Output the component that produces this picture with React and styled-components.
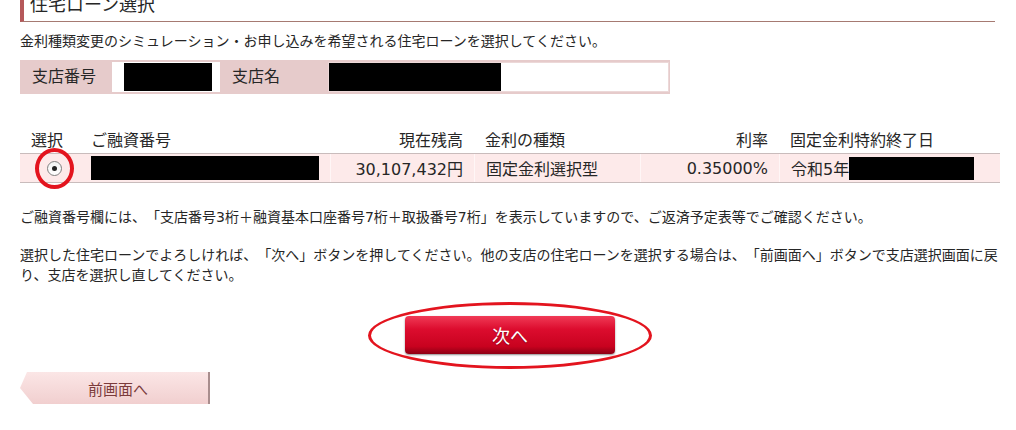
import React from "react";
import styled, { createGlobalStyle } from "styled-components";

const GlobalStyle = createGlobalStyle`
  body {
    margin: 0;
    background: #fff;
    color: #262626;
    font-family: "DejaVu Sans", "Noto Sans CJK JP", sans-serif;
    text-spacing-trim: space-all;
  }
`;

const Page = styled.div`
  width: 980px;
  margin-left: 20px;
  display: flow-root;
`;

const Title = styled.h2`
  margin: -6px 0 0;
  width: 975px;
  box-sizing: border-box;
  padding: 0 0 5px 6px;
  font-size: 18px;
  font-weight: normal;
  line-height: 22px;
  border-left: 4px solid #b5585a;
  border-bottom: 1px solid #a67a72;
`;

const Text = styled.p`
  margin: ${(p) => p.$top || 0}px -12px 0 0;
  font-size: 14px;
  line-height: 20px;
`;

const InfoBox = styled.div`
  display: flex;
  align-items: center;
  width: 650px;
  height: 34px;
  box-sizing: border-box;
  margin-top: 9px;
  background: #e6cbcb;
  font-size: 16px;
`;

const InfoLabel = styled.div`
  width: ${(p) => p.$w}px;
  box-sizing: border-box;
  padding-left: 12px;
  line-height: 30px;
`;

const InfoValue = styled.div`
  display: flex;
  align-items: center;
  height: 30px;
  box-sizing: border-box;
  background: #fff;
  width: ${(p) => (p.$w ? `${p.$w}px` : "auto")};
  flex: ${(p) => (p.$w ? "none" : 1)};
  margin-right: ${(p) => (p.$w ? 0 : 1)}px;
  padding-left: ${(p) => p.$pad}px;
  border: ${(p) => (p.$w ? "none" : "1px solid #ecd8d8")};
`;

const Redact = styled.span`
  display: inline-block;
  width: ${(p) => p.$w}px;
  height: ${(p) => p.$h || 28}px;
  background: #000;
`;

const Table = styled.div`
  margin-top: 31px;
  font-size: 16px;
`;

const Row = styled.div`
  display: grid;
  grid-template-columns: 60px 250px 144px 166px 139px 1fr;
  height: 29px;
  box-sizing: border-box;
  border-bottom: 1px solid #c9bcbc;
  background: ${(p) => (p.$data ? "#fdeaea" : "#fff")};
`;

const Cell = styled.div`
  display: flex;
  align-items: center;
  justify-content: ${(p) => (p.$right ? "flex-end" : "flex-start")};
  padding: 0 11px;
  white-space: nowrap;
  border-left: ${(p) => (p.$sep ? "1px solid #fff6f6" : "none")};
`;

const RadioCell = styled.div`
  display: flex;
  align-items: center;
  padding-left: 27px;
`;

const RadioWrap = styled.span`
  position: relative;
  display: inline-flex;
`;

const Radio = styled.span`
  width: 13px;
  height: 13px;
  border-radius: 50%;
  border: 1px solid #808080;
  background: linear-gradient(#f2f2f2, #fff);
  display: flex;
  align-items: center;
  justify-content: center;
  &::after {
    content: "";
    width: 5px;
    height: 5px;
    border-radius: 50%;
    background: #222;
  }
`;

const Ring = styled.span`
  position: absolute;
  left: ${(p) => p.$l}px;
  top: ${(p) => p.$t}px;
  width: ${(p) => p.$w}px;
  height: ${(p) => p.$h}px;
  box-sizing: border-box;
  border: ${(p) => p.$s || 3}px solid #e3141e;
  border-radius: 50%;
  pointer-events: none;
`;

const Actions = styled.div`
  display: flex;
  justify-content: center;
  margin-top: 31px;
`;

const NextButton = styled.button`
  position: relative;
  width: 210px;
  height: 38px;
  border: none;
  border-radius: 4px;
  background: linear-gradient(#f03a56 0%, #dc0c2e 35%, #c8021f 80%, #8e0014 100%);
  box-shadow: 0 1px 2px rgba(0, 0, 0, 0.45);
  color: #fff;
  font-family: "DejaVu Sans", "Noto Sans CJK JP", sans-serif;
  font-size: 18px;
  text-shadow: 0 1px 1px rgba(0, 0, 0, 0.3);
`;

const BackButton = styled.button`
  display: block;
  margin-top: 18px;
  width: 190px;
  height: 32px;
  padding: 0 0 0 6px;
  border: none;
  clip-path: polygon(7px 0, 100% 0, 100% 100%, 13px 100%, 0 50%);
  background: linear-gradient(#fbe6e6, #f1cfcf);
  box-shadow: inset -2px 0 0 #a88d8d;
  color: #7b3b3b;
  font-family: "DejaVu Sans", "Noto Sans CJK JP", sans-serif;
  font-size: 15px;
`;

export default function App() {
  return (
    <Page>
      <GlobalStyle />
      <Title>住宅ローン選択</Title>
      <Text $top={9}>金利種類変更のシミュレーション・お申し込みを希望される住宅ローンを選択してください。</Text>

      <InfoBox>
        <InfoLabel $w={92}>支店番号</InfoLabel>
        <InfoValue $w={108} $pad={12}>
          <Redact $w={88} />
        </InfoValue>
        <InfoLabel $w={108}>支店名</InfoLabel>
        <InfoValue $pad={0}>
          <Redact $w={172} />
        </InfoValue>
      </InfoBox>

      <Table>
        <Row>
          <Cell>選択</Cell>
          <Cell>ご融資番号</Cell>
          <Cell $right>現在残高</Cell>
          <Cell>金利の種類</Cell>
          <Cell $right>利率</Cell>
          <Cell>固定金利特約終了日</Cell>
        </Row>
        <Row $data>
          <RadioCell>
            <RadioWrap>
              <Radio />
              <Ring $l={-12} $t={-13} $w={39} $h={41} $s={4} />
            </RadioWrap>
          </RadioCell>
          <Cell>
            <Redact $w={231} $h={24} />
          </Cell>
          <Cell $right $sep>30,107,432円</Cell>
          <Cell $sep>固定金利選択型</Cell>
          <Cell $right $sep>0.35000%</Cell>
          <Cell $sep>
            令和5年<Redact $w={125} $h={23} />
          </Cell>
        </Row>
      </Table>

      <Text $top={24}>ご融資番号欄には、「支店番号3桁＋融資基本口座番号7桁＋取扱番号7桁」を表示していますので、ご返済予定表等でご確認ください。</Text>
      <Text $top={18}>選択した住宅ローンでよろしければ、「次へ」ボタンを押してください。他の支店の住宅ローンを選択する場合は、「前画面へ」ボタンで支店選択画面に戻り、支店を選択し直してください。</Text>

      <Actions>
        <NextButton>
          次へ
          <Ring $l={-37} $t={-14} $w={284} $h={67} />
        </NextButton>
      </Actions>
      <BackButton>前画面へ</BackButton>
    </Page>
  );
}
